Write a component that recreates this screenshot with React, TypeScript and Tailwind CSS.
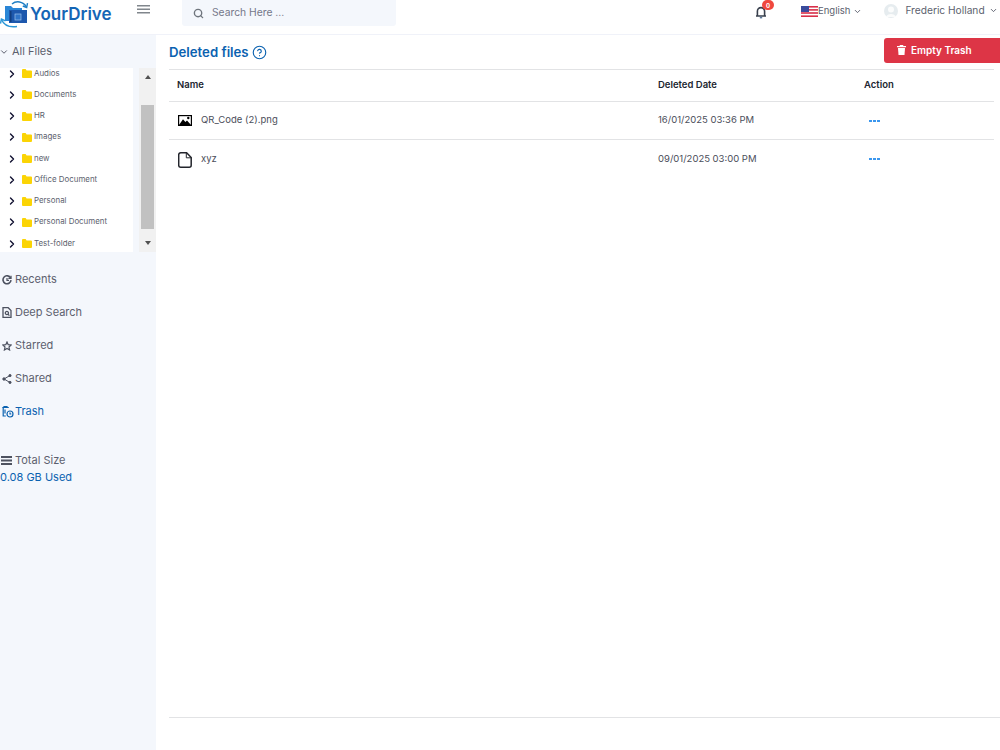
import { ChevronDown, ChevronRight, Search, CircleHelp } from "lucide-react";

const folders = ["Audios", "Documents", "HR", "Images", "new", "Office Document", "Personal", "Personal Document", "Test-folder"];

function Logo() {
  return (
    <svg width="30" height="27" viewBox="0 0 30 27" fill="none" className="shrink-0">
      <path d="M5 20V5h6l2 2h9v3H9v10z" fill="#2a86d6" />
      <path d="M9 9h18v13H9z" fill="#1d58ad" />
      <rect x="10" y="10" width="1.5" height="11" fill="#123f80" />
      <rect x="15" y="13" width="6" height="6" fill="#2f74c8" stroke="#9cc0ea" strokeWidth="0.7" />
      <path d="M12 3C16 -0.5 23 0 26.5 6" stroke="#1f7fc4" strokeWidth="1.4" />
      <path d="M27.5 2.2 26.7 6.5 22.8 5" stroke="#1f7fc4" strokeWidth="1.4" />
      <path d="M17 25.5C10 26.5 4 24.5 1.5 18.5" stroke="#2a96d6" strokeWidth="1.4" />
      <path d="M0.5 22.5 1.4 18 5.5 19.8" stroke="#2a96d6" strokeWidth="1.4" />
    </svg>
  );
}

function HamburgerIcon() {
  return (
    <svg width="13" height="9" viewBox="0 0 13 9" className="mt-[5px] shrink-0" fill="#80868c">
      <rect width="13" height="1.5" />
      <rect y="3.5" width="13" height="1.5" />
      <rect y="7" width="13" height="1.5" />
    </svg>
  );
}

function BellIcon() {
  return (
    <svg width="12" height="14" viewBox="0 0 12 14" fill="none" className="shrink-0" stroke="#39404d" strokeWidth="1.6">
      <path d="M1 11h10M2.4 11V6.2a3.6 3.6 0 0 1 7.2 0V11" />
      <path d="M4.8 12.6h2.4" stroke="#5d7a9c" />
    </svg>
  );
}

function Flag() {
  return (
    <svg width="17" height="11" viewBox="0 0 17 11" className="shrink-0">
      <rect width="17" height="11" fill="#fff" />
      <rect width="17" height="1.6" fill="#d8304a" />
      <rect y="3.1" width="17" height="1.6" fill="#d8304a" />
      <rect y="6.2" width="17" height="1.6" fill="#d8304a" />
      <rect y="9.4" width="17" height="1.6" fill="#d8304a" />
      <rect width="8" height="6" fill="#3a4b9c" />
    </svg>
  );
}

function Avatar() {
  return (
    <svg width="14" height="14" viewBox="0 0 14 14" className="shrink-0">
      <circle cx="7" cy="7" r="7" fill="#e6ecef" />
      <circle cx="7" cy="5.5" r="3" fill="#fbfcfc" />
      <path d="M2 13c1-4 9-4 10 0z" fill="#fbfcfc" />
    </svg>
  );
}

function FolderIcon() {
  return (
    <svg width="10" height="9" viewBox="0 0 10 9" className="shrink-0">
      <path d="M0 1a1 1 0 0 1 1-1h2.6l1 1.5H9a1 1 0 0 1 1 1V8a1 1 0 0 1-1 1H1a1 1 0 0 1-1-1z" fill="#fbd405" />
    </svg>
  );
}

function RecentsIcon() {
  return (
    <svg width="10" height="10" viewBox="0 0 10 10" fill="none" stroke="#4d5260" strokeWidth="1.6" className="shrink-0">
      <path d="M8.6 3A4 4 0 1 0 9 5.2" />
      <path d="M9 0.8V3.4H6.4" strokeWidth="1.3" />
      <path d="M5 3v2.3h2" strokeWidth="1.2" />
    </svg>
  );
}

function DeepSearchIcon() {
  return (
    <svg width="10" height="11" viewBox="0 0 10 11" fill="none" stroke="#4d5260" strokeWidth="1.3" className="shrink-0">
      <path d="M1 .7h5.2L9 3.5v6.8H1z" />
      <circle cx="4.9" cy="6" r="1.6" />
      <path d="M6 7.2 7.4 8.6" />
    </svg>
  );
}

function StarIcon() {
  return (
    <svg width="10" height="10" viewBox="0 0 10 10" fill="none" stroke="#4d5260" strokeWidth="1.2" className="shrink-0">
      <path d="M5 1 6.2 3.7 9.2 4 7 6 7.6 9 5 7.5 2.4 9 3 6 .8 4 3.8 3.7z" />
    </svg>
  );
}

function ShareIcon() {
  return (
    <svg width="10" height="10" viewBox="0 0 10 10" fill="#4d5260" stroke="#4d5260" strokeWidth="1" className="shrink-0">
      <path d="M8 1.5 2 5l6 3.5" fill="none" />
      <circle cx="8" cy="1.6" r="1.1" />
      <circle cx="2" cy="5" r="1.2" />
      <circle cx="8" cy="8.4" r="1.1" />
    </svg>
  );
}

function TrashClock() {
  return (
    <svg width="12" height="12" viewBox="0 0 12 12" fill="none" stroke="#0b62b0" strokeWidth="1.2" className="shrink-0">
      <path d="M0.3 1.5h6.5M2 1.5V0.6h3v0.9M1.2 1.5v8.5h2.6M3 3.5v4" />
      <circle cx="8" cy="8" r="3" />
      <path d="M8 6.5V8h1.3" />
    </svg>
  );
}

function BarsIcon() {
  return (
    <svg width="11" height="9" viewBox="0 0 11 9" fill="#4d5260" className="shrink-0">
      <rect width="11" height="2" />
      <rect y="3.5" width="11" height="2" />
      <rect y="7" width="11" height="2" />
    </svg>
  );
}

function WhiteTrash() {
  return (
    <svg width="9" height="10" viewBox="0 0 9 10" fill="#fff" className="shrink-0">
      <path d="M3 0h3l.5 1H9v1.2H0V1h2.5z" />
      <path d="M1 3h7l-.5 7h-6z" />
    </svg>
  );
}

function ImageFileIcon() {
  return (
    <svg width="14" height="11" viewBox="0 0 14 11" className="shrink-0">
      <rect x=".6" y=".6" width="12.8" height="9.8" fill="#fff" stroke="#000" strokeWidth="1.2" />
      <circle cx="10.3" cy="3" r="1.2" fill="#000" />
      <path d="M1 10 5 4.2 7.4 7 9 5.6 13 10z" fill="#000" />
    </svg>
  );
}

function PlainFileIcon() {
  return (
    <svg width="14" height="16" viewBox="0 0 14 16" fill="none" stroke="#23252c" strokeWidth="1.5" className="shrink-0">
      <path d="M2.7.8H8.6l4.6 4.7v7.7a2 2 0 0 1-2 2H2.7a2 2 0 0 1-2-2V2.8a2 2 0 0 1 2-2z" />
      <path d="M8.3.8v5h4.9" strokeWidth="1" />
    </svg>
  );
}

function NavItem({ icon, label, active }: { icon: React.ReactNode; label: string; active?: boolean }) {
  return (
    <div className={`flex h-[33px] items-center gap-[3px] pl-[2px] text-[11px] ${active ? "text-[#0b62b0]" : "text-[#5c5f6e]"}`}>
      <span className="flex w-[10px]">{icon}</span>
      <span>{label}</span>
    </div>
  );
}

function Row({ icon, name, date, last }: { icon: React.ReactNode; name: string; date: string; last?: boolean }) {
  return (
    <div className={`flex h-[38px] items-center text-[9.5px] text-[#4b4e5a] ${last ? "pt-[1px]" : "border-b border-[#e2e3e5]"}`}>
      <div className="flex w-[489px] items-center gap-[9px] pl-[9px]">
        <span className="flex w-[14px] justify-center">{icon}</span>
        <span>{name}</span>
      </div>
      <div className="w-[206px]">{date}</div>
      <div className={`flex gap-[1px] pl-[5px] ${last ? "-mt-[1px]" : ""}`}>
        <span className="h-[2px] w-[3px] bg-[#3b97ee]" />
        <span className="h-[2px] w-[3px] bg-[#3b97ee]" />
        <span className="h-[2px] w-[3px] bg-[#3b97ee]" />
      </div>
    </div>
  );
}

export default function App() {
  return (
    <div className="flex h-[750px] w-[1000px] flex-col overflow-hidden bg-white font-['Inter','Liberation_Sans',sans-serif]">
      <header className="flex h-[35px] shrink-0 items-start whitespace-nowrap border-b border-[#f0f2f9]">
        <div className="flex w-[137px] items-center pt-[1px]">
          <Logo />
          <span className="text-[17px] leading-[27px] font-semibold text-[#1565b5]">YourDrive</span>
        </div>
        <HamburgerIcon />
        <div className="ml-[32px] flex h-[26px] w-[214px] items-center gap-[8px] rounded-b-[3px] bg-[#f4f7fc] pl-[11px] text-[10.3px] text-[#74788a]">
          <Search size={11} strokeWidth={3} className="text-[#6f757d]" />
          <span>Search Here ...</span>
        </div>
        <div className="relative ml-[359px] mt-[5px]">
          <BellIcon />
          <span className="absolute -right-[7px] -top-[5px] flex h-[10px] w-[12px] items-center justify-center rounded-full bg-[#f0483e] text-[6px] font-bold text-white">0</span>
        </div>
        <div className="ml-[34px] mt-[4px] flex items-center text-[9.5px] text-[#5c5f6e]">
          <Flag />
          <span>English</span>
          <ChevronDown size={9} strokeWidth={2.5} className="ml-[3px]" />
        </div>
        <div className="ml-[22px] mt-[3px] flex items-center text-[10.2px] text-[#5c5f6e]">
          <Avatar />
          <span className="ml-[7px]">Frederic Holland</span>
          <ChevronDown size={9} strokeWidth={2.5} className="ml-[4px]" />
        </div>
      </header>

      <div className="flex flex-1">
        <aside className="w-[156px] shrink-0 bg-[#f4f7fc]">
          <div className="flex h-[33px] items-center gap-[3px] text-[11px] text-[#5c5f6e]">
            <ChevronDown size={10} strokeWidth={2.4} className="-ml-[1px]" />
            <span>All Files</span>
          </div>
          <div className="flex h-[184px]">
            <div className="w-[133px] overflow-hidden bg-white">
              <div className="-mt-[5px]">
                {folders.map((f) => (
                  <div key={f} className="flex h-[21.25px] items-center pl-[6px] text-[7.9px] text-[#5c5f6e]">
                    <ChevronRight size={12} strokeWidth={2.8} className="text-[#101030]" />
                    <span className="ml-[4px]"><FolderIcon /></span>
                    <span className="ml-[2px]">{f}</span>
                  </div>
                ))}
              </div>
            </div>
            <div className="ml-[6px] flex w-[17px] flex-col bg-[#f1f1f1] pl-[2px]">
              <div className="flex h-[37px] w-[13px] justify-center pt-[7px]">
                <span className="h-0 w-0 border-x-[3.5px] border-b-[4px] border-x-transparent border-b-[#505050]" />
              </div>
              <div className="h-[124px] w-[13px] bg-[#c1c1c1]" />
              <div className="flex w-[13px] flex-1 items-center justify-center pt-[4px]">
                <span className="h-0 w-0 border-x-[3.5px] border-t-[4px] border-x-transparent border-t-[#505050]" />
              </div>
            </div>
          </div>
          <div className="mt-[11px]">
            <NavItem icon={<RecentsIcon />} label="Recents" />
            <NavItem icon={<DeepSearchIcon />} label="Deep Search" />
            <NavItem icon={<StarIcon />} label="Starred" />
            <NavItem icon={<ShareIcon />} label="Shared" />
            <NavItem icon={<TrashClock />} label="Trash" active />
          </div>
          <div className="mt-[24px] text-[11px] leading-[17px]">
            <div className="flex items-center gap-[3px] pl-[1px] text-[#5c5f6e]">
              <BarsIcon />
              <span>Total Size</span>
            </div>
            <div className="text-[#0b62b0]">0.08 GB Used</div>
          </div>
        </aside>

        <main className="flex flex-1 flex-col pl-[13px]">
          <div className="flex h-[34px] items-start justify-between">
            <div className="mt-[8px] flex items-center gap-[3px] text-[13.2px] font-semibold text-[#0b62b0]">
              <span>Deleted files</span>
              <CircleHelp size={15} strokeWidth={1.8} />
            </div>
            <button className="mt-[3px] flex h-[25px] w-[116px] items-center gap-[5px] rounded-l-[3px] bg-[#dd3546] pb-[1px] pl-[13px] text-[10px] font-semibold text-white">
              <WhiteTrash />
              <span>Empty Trash</span>
            </button>
          </div>
          <div className="mr-[6px] border-t border-[#e2e3e5]">
            <div className="flex h-[32px] items-center border-b border-[#e2e3e5] text-[9.5px] font-semibold text-[#212530]">
              <div className="w-[489px] pl-[8px]">Name</div>
              <div className="w-[206px]">Deleted Date</div>
              <div>Action</div>
            </div>
            <Row icon={<ImageFileIcon />} name="QR_Code (2).png" date="16/01/2025 03:36 PM" />
            <Row icon={<PlainFileIcon />} name="xyz" date="09/01/2025 03:00 PM" last />
          </div>
          <div className="mt-[539px] border-t border-[#e2e3e5]" />
        </main>
      </div>
    </div>
  );
}
